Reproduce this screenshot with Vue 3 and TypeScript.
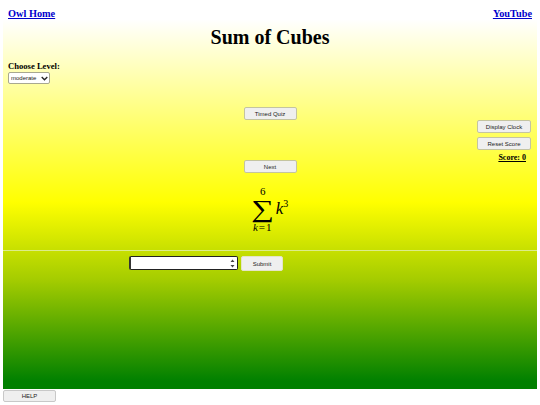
<script setup lang="ts">
</script>

<template>
  <div class="page">
    <div class="links">
      <a href="#">Owl Home</a>
      <a href="#">YouTube</a>
    </div>
    <h1>Sum of Cubes</h1>
    <div class="level">
      <label for="lvl">Choose Level:</label>
      <span class="select-wrap">
        <select id="lvl"><option>moderate</option></select>
        <svg class="chevron" width="7" height="5" viewBox="0 0 7 5" aria-hidden="true">
          <path d="M0.7 1 L3.5 3.8 L6.3 1" fill="none" stroke="#222" stroke-width="1.3" />
        </svg>
      </span>
    </div>
    <div class="stage">
      <button class="btn wide quiz">Timed Quiz</button>
      <aside class="side">
        <button class="btn wide">Display Clock</button>
        <button class="btn wide">Reset Score</button>
        <span class="score">Score: 0</span>
      </aside>
      <button class="btn wide next">Next</button>
      <div class="math">
        <span class="limits">
          <span class="lim">6</span>
          <span class="sigma">∑</span>
          <span class="lim low"><i>k</i>=1</span>
        </span>
        <span class="term"><i>k</i><sup>3</sup></span>
      </div>
    </div>
    <div class="answer">
      <span class="field">
        <svg class="spin" width="5" height="9" viewBox="0 0 5 9" aria-hidden="true">
          <path d="M2.5 0.5 L4.5 3 H0.5 Z M2.5 8.5 L4.5 6 H0.5 Z" fill="#444" />
        </svg>
      </span>
      <button class="btn submit">Submit</button>
    </div>
  </div>
  <button class="btn wide help">HELP</button>
</template>

<style>
html, body { margin: 0; background: #fff; }
</style>

<style scoped>
.page {
  width: 534px;
  height: 389px;
  margin-left: 3px;
  box-sizing: border-box;
  padding-top: 7px;
  font-family: "Liberation Serif", serif;
  color: #000;
  background: linear-gradient(#fff 0, #fff 5%, #ff0 52%, #a4cc00 72%, #008000 98%);
}
.links {
  display: flex;
  justify-content: space-between;
  padding: 0 5px;
  font-size: 10.3px;
  font-weight: bold;
  line-height: 14px;
}
.links a { color: #00c; }
h1 {
  margin: 3px 0 0;
  text-align: center;
  font-size: 20px;
  line-height: 26px;
}
.level {
  display: flex;
  flex-direction: column;
  align-items: flex-start;
  padding-left: 5px;
  margin-top: 11px;
  font-size: 8.6px;
  font-weight: bold;
  line-height: 10px;
}
.select-wrap {
  position: relative;
  display: block;
  margin-top: 1px;
  line-height: 0;
}
select {
  appearance: none;
  box-sizing: border-box;
  width: 42px;
  height: 12px;
  margin: 0;
  padding: 0 0 0 2px;
  font: 6px "Liberation Sans", sans-serif;
  color: #222;
  background: #fff;
  border: 1px solid #a8a890;
  border-radius: 2px;
}
.chevron {
  position: absolute;
  right: 2px;
  top: 4px;
  pointer-events: none;
}
.stage {
  position: relative;
  display: flex;
  flex-direction: column;
  align-items: center;
  margin-top: 23px;
  height: 143px;
}
.btn {
  box-sizing: border-box;
  height: 13px;
  padding: 0;
  font: 6px "Liberation Sans", sans-serif;
  color: #222;
  background: #efefef;
  border: 1px solid #c4c4a0;
  border-radius: 2px;
}
.wide { width: 53px; }
.next { margin-top: 40px; }
.side {
  position: absolute;
  top: 13px;
  right: 6px;
  display: flex;
  flex-direction: column;
  align-items: flex-end;
  gap: 4px;
}
.side .btn { width: 54px; }
.score {
  margin-top: -1px;
  margin-right: 5px;
  font-size: 8px;
  font-weight: bold;
  line-height: 9px;
  text-decoration: underline;
}
.math {
  display: flex;
  align-items: center;
  margin-top: 13px;
  padding-left: 9px;
  transform: translateX(-5px);
}
.limits {
  display: flex;
  flex-direction: column;
  align-items: center;
  width: 24px;
}
.lim { font-size: 11px; line-height: 10px; }
.low { letter-spacing: 1px; white-space: nowrap; }
.sigma {
  font-size: 27px;
  line-height: 26px;
  height: 26px;
  transform: scale(1.18, 0.9);
}
.term { font-size: 17px; margin-left: 1px; line-height: 20px; }
.term sup { font-size: 10px; line-height: 0; }
.answer {
  display: flex;
  gap: 3px;
  align-items: flex-start;
  padding: 5px 0 0 126px;
  border-top: 1px solid #dcec8a;
}
.field {
  position: relative;
  display: block;
  box-sizing: border-box;
  width: 109px;
  height: 14px;
  background: #fff;
  border: 1px solid #222;
  border-left: 2px solid #333;
  border-radius: 2px;
}
.spin {
  position: absolute;
  right: 2px;
  top: 2px;
}
.submit { width: 42px; height: 15px; border-color: #e4e4c8; }
.help { display: block; margin: 1px 0 0 3px; height: 12px; border-color: #c8c8c8; }
</style>
